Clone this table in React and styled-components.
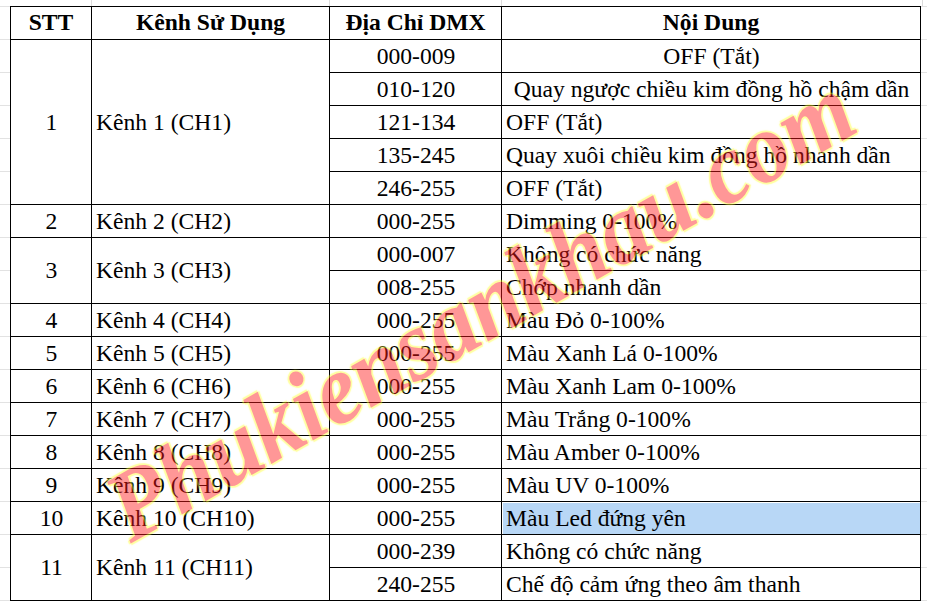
import React from 'react';
import styled, { createGlobalStyle } from 'styled-components';

const GlobalStyle = createGlobalStyle`
  html, body {
    margin: 0;
    padding: 0;
    background: #ffffff;
  }
  body {
    font-family: "Liberation Serif", "Times New Roman", serif;
    color: #000;
  }
`;

const rows = [
  {
    stt: '1',
    name: 'Kênh 1 (CH1)',
    items: [
      { dmx: '000-009', text: 'OFF (Tắt)', center: true },
      { dmx: '010-120', text: 'Quay ngược chiều kim đồng hồ chậm dần', center: true },
      { dmx: '121-134', text: 'OFF (Tắt)' },
      { dmx: '135-245', text: 'Quay xuôi chiều kim đồng hồ nhanh dần' },
      { dmx: '246-255', text: 'OFF (Tắt)' },
    ],
  },
  { stt: '2', name: 'Kênh 2 (CH2)', items: [{ dmx: '000-255', text: 'Dimming 0-100%' }] },
  {
    stt: '3',
    name: 'Kênh 3 (CH3)',
    items: [
      { dmx: '000-007', text: 'Không có chức năng' },
      { dmx: '008-255', text: 'Chớp nhanh dần' },
    ],
  },
  { stt: '4', name: 'Kênh 4 (CH4)', items: [{ dmx: '000-255', text: 'Màu Đỏ 0-100%' }] },
  { stt: '5', name: 'Kênh 5 (CH5)', items: [{ dmx: '000-255', text: 'Màu Xanh Lá 0-100%' }] },
  { stt: '6', name: 'Kênh 6 (CH6)', items: [{ dmx: '000-255', text: 'Màu Xanh Lam 0-100%' }] },
  { stt: '7', name: 'Kênh 7 (CH7)', items: [{ dmx: '000-255', text: 'Màu Trắng 0-100%' }] },
  { stt: '8', name: 'Kênh 8 (CH8)', items: [{ dmx: '000-255', text: 'Màu Amber 0-100%' }] },
  { stt: '9', name: 'Kênh 9 (CH9)', items: [{ dmx: '000-255', text: 'Màu UV 0-100%' }] },
  { stt: '10', name: 'Kênh 10 (CH10)', items: [{ dmx: '000-255', text: 'Màu Led đứng yên', selected: true }] },
  {
    stt: '11',
    name: 'Kênh 11 (CH11)',
    items: [
      { dmx: '000-239', text: 'Không có chức năng' },
      { dmx: '240-255', text: 'Chế độ cảm ứng theo âm thanh' },
    ],
  },
];

const App = () => {
  return (
    <>
      <GlobalStyle />
      <Sheet>
        <Table>
          <colgroup>
            <col style={{ width: 81 }} />
            <col style={{ width: 238 }} />
            <col style={{ width: 172 }} />
            <col style={{ width: 419 }} />
          </colgroup>
          <thead>
            <tr>
              <HeadCell>STT</HeadCell>
              <HeadCell>Kênh Sử Dụng</HeadCell>
              <HeadCell>Địa Chỉ DMX</HeadCell>
              <HeadCell>Nội Dung</HeadCell>
            </tr>
          </thead>
          <tbody>
            {rows.map((row) =>
              row.items.map((item, i) => (
                <Row key={row.stt + '-' + i}>
                  {i === 0 && (
                    <>
                      <Cell $align="center" rowSpan={row.items.length}>{row.stt}</Cell>
                      <Cell rowSpan={row.items.length}>{row.name}</Cell>
                    </>
                  )}
                  <Cell $align="center">{item.dmx}</Cell>
                  <Cell $align={item.center ? 'center' : 'left'} $selected={item.selected}>
                    {item.text}
                  </Cell>
                </Row>
              ))
            )}
          </tbody>
        </Table>
        <Watermark>Phukiensankhau.com</Watermark>
      </Sheet>
    </>
  );
};

const Sheet = styled.div`
  position: relative;
  width: 927px;
  height: 606px;
  overflow: hidden;
  box-sizing: border-box;
  padding: 6px 0 0 10px;
  background:
    linear-gradient(
        to right,
        transparent 91px, #dcdcdc 91px, #dcdcdc 92px,
        transparent 92px, transparent 329px, #dcdcdc 329px, #dcdcdc 330px,
        transparent 330px, transparent 501px, #dcdcdc 501px, #dcdcdc 502px,
        transparent 502px, transparent 922px, #dcdcdc 922px, #dcdcdc 923px,
        transparent 923px
      )
      0 0 / 100% 6px no-repeat,
    repeating-linear-gradient(
      to bottom,
      transparent 0, transparent 6px, #e2e2e2 6px, #e2e2e2 7px, transparent 7px, transparent 33px
    );
`;

const Table = styled.table`
  border-collapse: collapse;
  table-layout: fixed;
  width: 911px;
  background: #ffffff;
  font-size: 23.6px;
`;

const HeadCell = styled.th`
  height: 32px;
  padding: 0 4px;
  border: 1px solid #000;
  font-weight: bold;
  text-align: center;
  vertical-align: middle;
  line-height: 1;
  white-space: nowrap;
`;

const Row = styled.tr`
  height: 33px;
`;

const Cell = styled.td`
  height: 31px;
  padding: 1px 3px 0 4px;
  border: 1px solid #000;
  text-align: ${({ $align }) => $align || 'left'};
  vertical-align: middle;
  line-height: 1;
  white-space: nowrap;
  background: ${({ $selected }) => ($selected ? '#b8d7f6' : '#ffffff')};
  box-shadow: ${({ $selected }) => ($selected ? 'inset 1px 1px 0 #ffffff' : 'none')};
`;

const Watermark = styled.span`
  position: absolute;
  left: 480px;
  top: 308px;
  transform: translate(-50%, -50%) rotate(-29.5deg) scaleX(0.93);
  font-family: "Liberation Serif", "Times New Roman", serif;
  font-weight: bold;
  font-style: italic;
  font-size: 100px;
  line-height: 1;
  white-space: nowrap;
  color: #ff1a1a;
  opacity: 0.45;
  text-shadow:
    2px 0 1px #ffff30,
    -2px 0 1px #ffff30,
    0 2px 1px #ffff30,
    0 -2px 1px #ffff30,
    0 0 3px #ffff60;
  pointer-events: none;
`;

export default App;
